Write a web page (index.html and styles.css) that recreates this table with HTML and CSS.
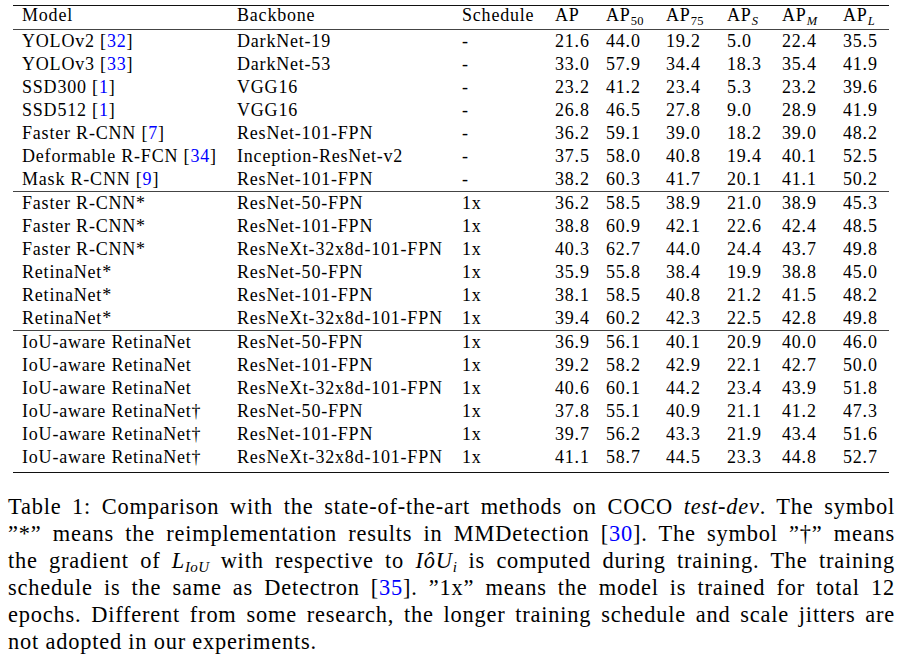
FILE: index.html
```html
<!DOCTYPE html>
<html lang="en">
<head>
<meta charset="utf-8">
<title>Table 1</title>
<link rel="stylesheet" href="styles.css">
</head>
<body>
<div class="tbl">
  <div class="row head">
    <span>Model</span><span>Backbone</span><span>Schedule</span><span>AP</span>
    <span>AP<sub class="sb">50</sub></span><span>AP<sub class="sb">75</sub></span>
    <span>AP<sub class="sb it">S</sub></span><span>AP<sub class="sb it">M</sub></span><span>AP<sub class="sb it">L</sub></span>
  </div>
  <div class="group">
    <div class="row"><span>YOLOv2 [<a class="cite">32</a>]</span><span>DarkNet-19</span><span>-</span><span>21.6</span><span>44.0</span><span>19.2</span><span>5.0</span><span>22.4</span><span>35.5</span></div>
    <div class="row"><span>YOLOv3 [<a class="cite">33</a>]</span><span>DarkNet-53</span><span>-</span><span>33.0</span><span>57.9</span><span>34.4</span><span>18.3</span><span>35.4</span><span>41.9</span></div>
    <div class="row"><span>SSD300 [<a class="cite">1</a>]</span><span>VGG16</span><span>-</span><span>23.2</span><span>41.2</span><span>23.4</span><span>5.3</span><span>23.2</span><span>39.6</span></div>
    <div class="row"><span>SSD512 [<a class="cite">1</a>]</span><span>VGG16</span><span>-</span><span>26.8</span><span>46.5</span><span>27.8</span><span>9.0</span><span>28.9</span><span>41.9</span></div>
    <div class="row"><span>Faster R-CNN [<a class="cite">7</a>]</span><span>ResNet-101-FPN</span><span>-</span><span>36.2</span><span>59.1</span><span>39.0</span><span>18.2</span><span>39.0</span><span>48.2</span></div>
    <div class="row"><span>Deformable R-FCN [<a class="cite">34</a>]</span><span>Inception-ResNet-v2</span><span>-</span><span>37.5</span><span>58.0</span><span>40.8</span><span>19.4</span><span>40.1</span><span>52.5</span></div>
    <div class="row"><span>Mask R-CNN [<a class="cite">9</a>]</span><span>ResNet-101-FPN</span><span>-</span><span>38.2</span><span>60.3</span><span>41.7</span><span>20.1</span><span>41.1</span><span>50.2</span></div>
  </div>
  <div class="group">
    <div class="row"><span>Faster R-CNN*</span><span>ResNet-50-FPN</span><span>1x</span><span>36.2</span><span>58.5</span><span>38.9</span><span>21.0</span><span>38.9</span><span>45.3</span></div>
    <div class="row"><span>Faster R-CNN*</span><span>ResNet-101-FPN</span><span>1x</span><span>38.8</span><span>60.9</span><span>42.1</span><span>22.6</span><span>42.4</span><span>48.5</span></div>
    <div class="row"><span>Faster R-CNN*</span><span>ResNeXt-32x8d-101-FPN</span><span>1x</span><span>40.3</span><span>62.7</span><span>44.0</span><span>24.4</span><span>43.7</span><span>49.8</span></div>
    <div class="row"><span>RetinaNet*</span><span>ResNet-50-FPN</span><span>1x</span><span>35.9</span><span>55.8</span><span>38.4</span><span>19.9</span><span>38.8</span><span>45.0</span></div>
    <div class="row"><span>RetinaNet*</span><span>ResNet-101-FPN</span><span>1x</span><span>38.1</span><span>58.5</span><span>40.8</span><span>21.2</span><span>41.5</span><span>48.2</span></div>
    <div class="row"><span>RetinaNet*</span><span>ResNeXt-32x8d-101-FPN</span><span>1x</span><span>39.4</span><span>60.2</span><span>42.3</span><span>22.5</span><span>42.8</span><span>49.8</span></div>
  </div>
  <div class="group last">
    <div class="row"><span>IoU-aware RetinaNet</span><span>ResNet-50-FPN</span><span>1x</span><span>36.9</span><span>56.1</span><span>40.1</span><span>20.9</span><span>40.0</span><span>46.0</span></div>
    <div class="row"><span>IoU-aware RetinaNet</span><span>ResNet-101-FPN</span><span>1x</span><span>39.2</span><span>58.2</span><span>42.9</span><span>22.1</span><span>42.7</span><span>50.0</span></div>
    <div class="row"><span>IoU-aware RetinaNet</span><span>ResNeXt-32x8d-101-FPN</span><span>1x</span><span>40.6</span><span>60.1</span><span>44.2</span><span>23.4</span><span>43.9</span><span>51.8</span></div>
    <div class="row"><span>IoU-aware RetinaNet†</span><span>ResNet-50-FPN</span><span>1x</span><span>37.8</span><span>55.1</span><span>40.9</span><span>21.1</span><span>41.2</span><span>47.3</span></div>
    <div class="row"><span>IoU-aware RetinaNet†</span><span>ResNet-101-FPN</span><span>1x</span><span>39.7</span><span>56.2</span><span>43.3</span><span>21.9</span><span>43.4</span><span>51.6</span></div>
    <div class="row"><span>IoU-aware RetinaNet†</span><span>ResNeXt-32x8d-101-FPN</span><span>1x</span><span>41.1</span><span>58.7</span><span>44.5</span><span>23.3</span><span>44.8</span><span>52.7</span></div>
  </div>
</div>
<div class="caption">
  <span class="line">Table 1: Comparison with the state-of-the-art methods on COCO <i>test-dev</i>. The symbol</span>
  <span class="line"><span class="tok">”*”</span> means the reimplementation results in MMDetection [<a class="cite">30</a>]. The symbol <span class="tok">”†”</span> means</span>
  <span class="line">the gradient of <i>L</i><sub class="csub"><i>IoU</i></sub> with respective to <i>IôU</i><sub class="csub"><i>i</i></sub> is computed during training. The training</span>
  <span class="line">schedule is the same as Detectron [<a class="cite">35</a>]. ”1x” means the model is trained for total 12</span>
  <span class="line">epochs. Different from some research, the longer training schedule and scale jitters are</span>
  <span class="line final">not adopted in our experiments.</span>
</div>
</body>
</html>
```
FILE: styles.css
```css
body {
  margin: 0;
  background: #ffffff;
  color: #000000;
  font-family: "Liberation Serif", "Times New Roman", serif;
}

.tbl {
  margin: 5px 0 0 13px;
  width: 876px;
  border-top: 1.5px solid #111111;
  border-bottom: 1.5px solid #111111;
  font-size: 18px;
  letter-spacing: 0.8px;
}

.row {
  display: grid;
  grid-template-columns: 215px 225px 93px 51px 60px 61px 55px 61px 1fr;
  padding-left: 9px;
  height: 23px;
  line-height: 23px;
  white-space: nowrap;
}

.row.head {
  height: 22.5px;
  line-height: 18px;
  border-bottom: 1px solid #444444;
}

.group + .group {
  border-top: 1px solid #444444;
}

.group.last {
  padding-bottom: 3.5px;
}

.sb {
  font-size: 12.5px;
  letter-spacing: 0.3px;
  vertical-align: -4px;
  line-height: 0;
}

.it {
  font-style: italic;
}

.cite {
  color: #0000ff;
  text-decoration: none;
}

.caption {
  margin: 20px 0 0 8px;
  width: 887px;
  font-size: 22.4px;
  line-height: 27px;
  letter-spacing: 0.8px;
}

.line {
  display: block;
  text-align: justify;
  text-align-last: justify;
}

.line.final {
  text-align-last: left;
}

.tok {
  display: inline-block;
}

.csub {
  font-size: 15px;
  vertical-align: -4px;
  line-height: 0;
  letter-spacing: 0.3px;
}
```
